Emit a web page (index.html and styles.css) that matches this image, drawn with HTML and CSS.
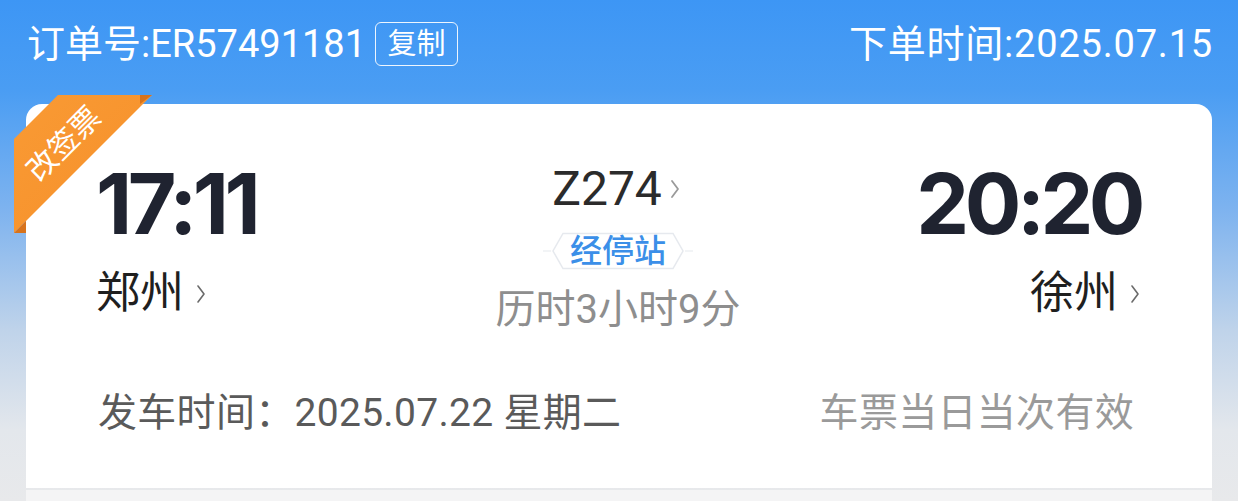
FILE: index.html
```html
<!DOCTYPE html>
<html lang="zh-CN">
<head>
<meta charset="utf-8">
<title>订单详情</title>
<link rel="stylesheet" href="styles.css">
</head>
<body>
<div class="page">
  <header class="top">
    <div class="order">
      <span class="order-no">订单号:ER57491181</span>
      <span class="copy">复制</span>
    </div>
    <div class="order-time">下单时间:2025.07.15</div>
  </header>

  <section class="card">
    <div class="ribbon">
      <div class="band"></div>
      <div class="fold fold-top"></div>
      <div class="fold fold-left"></div>
      <span class="ribbon-text">改签票</span>
    </div>

    <div class="journey">
      <div class="end end-start">
        <div class="time">17:11</div>
        <div class="city">郑州<svg class="chev" viewBox="0 0 10 20" width="10" height="20"><path d="M2 2 L8 10 L2 18" fill="none" stroke="#6b6b6b" stroke-width="1.6" stroke-linecap="round" stroke-linejoin="round"/></svg></div>
      </div>
      <div class="mid">
        <div class="train">Z274<svg class="chev chev-light" viewBox="0 0 10 20" width="10" height="20"><path d="M2 2 L8 10 L2 18" fill="none" stroke="#9a9a9a" stroke-width="1.8" stroke-linecap="round" stroke-linejoin="round"/></svg></div>
        <div class="stops">
          <svg class="stops-frame" viewBox="0 0 150 38" width="150" height="38" preserveAspectRatio="none">
            <path d="M0 19 H8" stroke="#eef0f3" stroke-width="1.5"/>
            <path d="M142 19 H150" stroke="#eef0f3" stroke-width="1.5"/>
            <path d="M20 1.5 H130 L140 19 L130 36.5 H20 L10 19 Z" fill="#fff" stroke="#e6e9ee" stroke-width="1.5"/>
          </svg>
          <span class="stops-text">经停站</span>
        </div>
        <div class="duration">历时3小时9分</div>
      </div>
      <div class="end end-finish">
        <div class="time">20:20</div>
        <div class="city">徐州<svg class="chev" viewBox="0 0 10 20" width="10" height="20"><path d="M2 2 L8 10 L2 18" fill="none" stroke="#6b6b6b" stroke-width="1.6" stroke-linecap="round" stroke-linejoin="round"/></svg></div>
      </div>
    </div>

    <div class="foot">
      <span class="depart">发车时间：2025.07.22 星期二</span>
      <span class="valid">车票当日当次有效</span>
    </div>
  </section>

  <div class="next-card"></div>
</div>
</body>
</html>
```

FILE: styles.css
```css
* { box-sizing: border-box; }

html, body {
  margin: 0;
  padding: 0;
}

body {
  width: 1238px;
  height: 501px;
  overflow: hidden;
  font-family: Roboto, "Noto Sans CJK SC", sans-serif;
  background: linear-gradient(180deg, #3d96f5 0px, #4a9df3 90px, #7eb3ef 210px, #bfd3ea 330px, #e3e7ec 430px, #e8e9eb 501px);
}

.page {
  display: flex;
  flex-direction: column;
  padding: 0 26px;
}

.top {
  height: 104px;
  display: flex;
  justify-content: space-between;
  align-items: flex-start;
  padding-top: 20px;
  color: #fff;
  font-size: 38px;
  line-height: 48px;
}

.order {
  display: flex;
  align-items: center;
  gap: 9px;
  margin-left: 1px;
}

.order-time {
  letter-spacing: 0.8px;
  margin-right: -1px;
}

.copy {
  display: inline-flex;
  align-items: center;
  justify-content: center;
  height: 44px;
  width: 83px;
  border: 1.5px solid rgba(255,255,255,0.9);
  border-radius: 6px;
  font-size: 29px;
  line-height: 1;
  letter-spacing: 0;
}

.card {
  position: relative;
  height: 384px;
  background: #fff;
  border-radius: 16px 16px 0 0;
  padding: 60px 72px 0 70px;
  display: flex;
  flex-direction: column;
}

/* ribbon over the card corner */
.ribbon {
  position: absolute;
  left: -12px;
  top: -9px;
  width: 140px;
  height: 140px;
}
.band {
  position: absolute;
  inset: 0;
  background: linear-gradient(135deg, #f99a34 0%, #f6902a 100%);
  clip-path: polygon(0 44px, 44px 0, 138px 0, 0 138px);
}
.fold {
  position: absolute;
  background: #d8731c;
}
.fold-top {
  left: 126px;
  top: 0;
  width: 12px;
  height: 9px;
  clip-path: polygon(0 100%, 100% 0, 0 0);
}
.fold-left {
  left: 0;
  top: 126px;
  width: 12px;
  height: 12px;
  clip-path: polygon(100% 0, 100% 100%, 0 100%);
}
.ribbon-text {
  position: absolute;
  left: 50px;
  top: 49px;
  transform: translate(-50%, -50%) rotate(-45deg);
  color: #fff;
  font-size: 30px;
  line-height: 1;
  white-space: nowrap;
}

.journey {
  display: flex;
  justify-content: space-between;
  align-items: flex-start;
}

.end {
  display: flex;
  flex-direction: column;
  width: 300px;
}
.end-finish { align-items: flex-end; }

.time {
  font-family: Inter, Roboto, sans-serif;
  font-weight: 700;
  font-size: 84px;
  line-height: 80px;
  color: #1f2330;
  letter-spacing: -4.5px;
}
.end-finish .time { margin-right: -1px; }

.city {
  display: flex;
  align-items: center;
  margin-top: 23px;
  font-size: 44px;
  line-height: 52px;
  color: #1f1f1f;
}
.city .chev {
  margin-left: 12px;
  margin-top: 2px;
}

.mid {
  display: flex;
  flex-direction: column;
  align-items: center;
  width: 300px;
}

.train {
  display: flex;
  align-items: center;
  font-size: 48px;
  line-height: 50px;
  color: #2b2b2b;
  margin-left: -4px;
}
.train .chev {
  margin-left: 8px;
}

.stops {
  position: relative;
  width: 150px;
  height: 38px;
  margin-top: 18px;
  display: flex;
  align-items: center;
  justify-content: center;
}
.stops-frame {
  position: absolute;
  inset: 0;
}
.stops-text {
  position: relative;
  font-size: 32px;
  line-height: 1;
  color: #3b8fe8;
  font-weight: 500;
}

.duration {
  margin-top: 16px;
  font-size: 40px;
  line-height: 48px;
  color: #8e8e8e;
}

.foot {
  display: flex;
  justify-content: space-between;
  align-items: center;
  margin-top: 56px;
  padding: 0 6px 0 2px;
  font-size: 39px;
  line-height: 46px;
}
.depart { color: #5a5a5a; letter-spacing: 0.3px; }
.valid { color: #9a9a9a; letter-spacing: 0.3px; }

.next-card {
  height: 20px;
  margin-top: 2px;
  background: #f4f4f5;
}
```
